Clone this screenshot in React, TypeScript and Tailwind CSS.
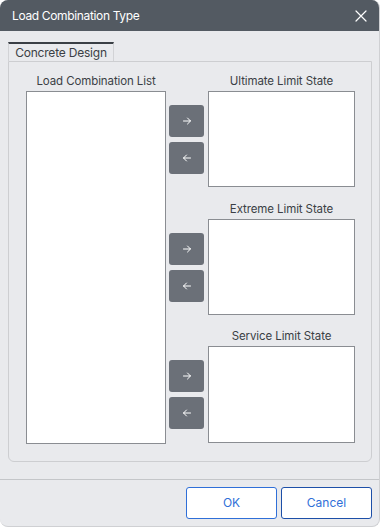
import React from "react";

const font = { fontFamily: "Inter, 'Noto Sans', sans-serif" };

function ArrowBtn({ dir }: { dir: "r" | "l" }) {
  return (
    <button className="w-[35px] h-[32px] rounded-[3px] bg-[#6b7078] flex items-center justify-center">
      <svg width="10" height="10" viewBox="0 0 10 10" fill="none" stroke="#ffffff" strokeWidth="1" strokeLinecap="round" strokeLinejoin="round">
        {dir === "r" ? (
          <>
            <path d="M1.5 5h7" />
            <path d="M5.5 2l3 3-3 3" />
          </>
        ) : (
          <>
            <path d="M8.5 5h-7" />
            <path d="M4.5 2l-3 3 3 3" />
          </>
        )}
      </svg>
    </button>
  );
}

function Group({ label, mt, h }: { label: string; mt: string; h: string }) {
  return (
    <div className={`flex flex-col ${mt}`}>
      <div className="h-[19px] ml-[39px] w-[147px] text-center text-[11.5px] tracking-[-0.1px] leading-[19px] text-[#3b3f45]">{label}</div>
      <div className="flex items-center gap-[4px]">
        <div className="flex flex-col gap-[5px]">
          <ArrowBtn dir="r" />
          <ArrowBtn dir="l" />
        </div>
        <div className={`w-[147px] ${h} bg-white border border-[#8a8d92]`} />
      </div>
    </div>
  );
}

export default function App() {
  return (
    <div className="w-[381px] h-[528px] bg-white" style={font}>
      <div className="w-[380px] h-[527px] rounded-[8px] border-r border-b border-[#cfd0d3] bg-[#e9eaed] overflow-hidden flex flex-col">
        <div className="h-[31px] bg-[#535a62] flex items-center justify-between pl-[12px] pr-[12px] shrink-0">
          <span className="text-white text-[12px] tracking-[-0.35px] leading-none">Load Combination Type</span>
          <svg width="12" height="12" viewBox="0 0 12 12" stroke="#ffffff" strokeWidth="1.2" strokeLinecap="round">
            <path d="M1 1l10 10M11 1L1 11" />
          </svg>
        </div>
        <div className="pl-[8px] pr-[7px] pt-[11px]">
          <div className="flex">
            <div className="w-[106px] h-[19px] border-t-2 border-t-[#3a3f45] border-x border-x-[#d2d3d6] flex items-center justify-center text-[12px] tracking-[-0.2px] text-[#3b3f45] bg-[#e9eaed]">
              Concrete Design
            </div>
          </div>
          <div className="h-[401px] border border-[#cdced1] rounded-b-[6px] pl-[17px] pt-[10px] flex gap-[3px]">
            <div className="flex flex-col">
              <div className="h-[19px] w-[140px] text-center text-[11.5px] tracking-[-0.1px] leading-[19px] text-[#3b3f45]">Load Combination List</div>
              <div className="w-[140px] h-[353px] bg-white border border-[#8a8d92]" />
            </div>
            <div className="flex flex-col">
              <Group label="Ultimate Limit State" mt="mt-0" h="h-[96px]" />
              <Group label="Extreme Limit State" mt="mt-[13px]" h="h-[96px]" />
              <Group label="Service Limit State" mt="mt-[12px]" h="h-[97px]" />
            </div>
          </div>
        </div>
        <div className="mt-[17px] h-px bg-[#c4c6c9]" />
        <div className="flex justify-end gap-[4px] pr-[7px] pt-[7px]">
          <button className="w-[91px] h-[32px] rounded-[3px] border border-[#2f6fd8] bg-white text-[12px] text-[#2f6fd8]">OK</button>
          <button className="w-[91px] h-[32px] rounded-[3px] border border-[#1d4fa8] bg-white text-[12px] text-[#2f6fd8]">Cancel</button>
        </div>
      </div>
    </div>
  );
}
